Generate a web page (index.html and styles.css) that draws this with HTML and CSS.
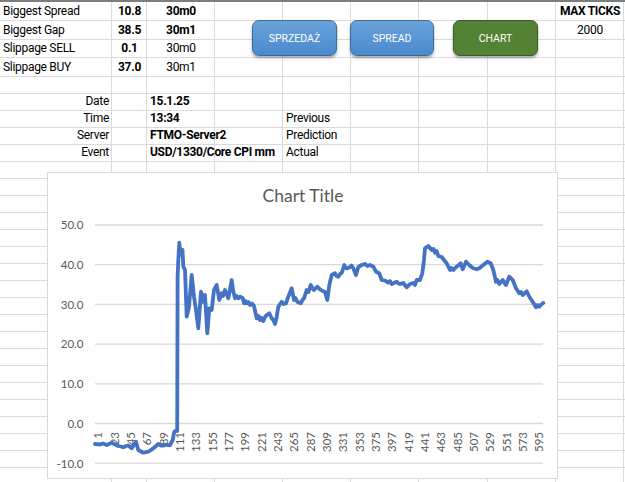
FILE: index.html
```html
<!DOCTYPE html>
<html lang="pl">
<head>
    <meta charset="UTF-8">
    <meta name="viewport" content="width=device-width, initial-scale=1.0">
    <title>Tick Monitor</title>
    <link rel="stylesheet" href="styles.css">
</head>
<body>
    <!-- Sheet cells (each row starts in column A) -->
    <div class="sheet">
        <div class="cell col-a">Biggest Spread</div>
        <div class="cell center bold">10.8</div>
        <div class="cell center bold">30m0</div>
        <div class="cell col-i center bold">MAX TICKS</div>

        <div class="cell col-a">Biggest Gap</div>
        <div class="cell center bold">38.5</div>
        <div class="cell center bold">30m1</div>
        <div class="cell col-i center">2000</div>

        <div class="cell col-a">Slippage SELL</div>
        <div class="cell center bold">0.1</div>
        <div class="cell center">30m0</div>

        <div class="cell col-a">Slippage BUY</div>
        <div class="cell center bold">37.0</div>
        <div class="cell center">30m1</div>

        <div class="cell col-a"></div>

        <div class="cell col-a right">Date</div>
        <div class="cell"></div>
        <div class="cell bold">15.1.25</div>

        <div class="cell col-a right">Time</div>
        <div class="cell"></div>
        <div class="cell bold">13:34</div>
        <div class="cell"></div>
        <div class="cell">Previous</div>

        <div class="cell col-a right">Server</div>
        <div class="cell"></div>
        <div class="cell bold">FTMO-Server2</div>
        <div class="cell"></div>
        <div class="cell">Prediction</div>

        <div class="cell col-a right">Event</div>
        <div class="cell"></div>
        <div class="cell bold">USD/1330/Core CPI mm</div>
        <div class="cell"></div>
        <div class="cell">Actual</div>
    </div>

    <!-- Macro buttons -->
    <button class="macro blue btn-sell">SPRZEDAŻ</button>
    <button class="macro blue btn-spread">SPREAD</button>
    <button class="macro green btn-chart">CHART</button>

    <!-- Chart -->
    <div class="chart">
        <svg width="509" height="304" viewBox="48 173 509 304">
            <text class="chart-title" x="303" y="202" text-anchor="middle">Chart Title</text>

            <g class="grid">
                <line x1="95" y1="225" x2="543" y2="225"/>
                <line x1="95" y1="264.7" x2="543" y2="264.7"/>
                <line x1="95" y1="304.4" x2="543" y2="304.4"/>
                <line x1="95" y1="344.1" x2="543" y2="344.1"/>
                <line x1="95" y1="383.8" x2="543" y2="383.8"/>
                <line x1="95" y1="423.5" x2="543" y2="423.5"/>
                <line x1="95" y1="463.2" x2="543" y2="463.2"/>
            </g>

            <g class="axis-y" text-anchor="end">
                <text x="83.5" y="229.3">50.0</text>
                <text x="83.5" y="269">40.0</text>
                <text x="83.5" y="308.7">30.0</text>
                <text x="83.5" y="348.4">20.0</text>
                <text x="83.5" y="388.1">10.0</text>
                <text x="83.5" y="427.8">0.0</text>
                <text x="83.5" y="467.5">-10.0</text>
            </g>

            <g class="axis-x" text-anchor="end">
                <text transform="translate(102.3 432) rotate(-90)">1</text>
                <text transform="translate(118.6 432) rotate(-90)">23</text>
                <text transform="translate(135 432) rotate(-90)">45</text>
                <text transform="translate(151.3 432) rotate(-90)">67</text>
                <text transform="translate(167.6 432) rotate(-90)">89</text>
                <text transform="translate(184 432) rotate(-90)">111</text>
                <text transform="translate(200.3 432) rotate(-90)">133</text>
                <text transform="translate(216.6 432) rotate(-90)">155</text>
                <text transform="translate(233 432) rotate(-90)">177</text>
                <text transform="translate(249.3 432) rotate(-90)">199</text>
                <text transform="translate(265.6 432) rotate(-90)">221</text>
                <text transform="translate(282 432) rotate(-90)">243</text>
                <text transform="translate(298.3 432) rotate(-90)">265</text>
                <text transform="translate(314.6 432) rotate(-90)">287</text>
                <text transform="translate(331 432) rotate(-90)">309</text>
                <text transform="translate(347.3 432) rotate(-90)">331</text>
                <text transform="translate(363.6 432) rotate(-90)">353</text>
                <text transform="translate(380 432) rotate(-90)">375</text>
                <text transform="translate(396.3 432) rotate(-90)">397</text>
                <text transform="translate(412.6 432) rotate(-90)">419</text>
                <text transform="translate(429 432) rotate(-90)">441</text>
                <text transform="translate(445.3 432) rotate(-90)">463</text>
                <text transform="translate(461.6 432) rotate(-90)">485</text>
                <text transform="translate(478 432) rotate(-90)">507</text>
                <text transform="translate(494.3 432) rotate(-90)">529</text>
                <text transform="translate(510.6 432) rotate(-90)">551</text>
                <text transform="translate(527 432) rotate(-90)">573</text>
                <text transform="translate(543.3 432) rotate(-90)">595</text>
            </g>

            <!-- series: ticks -->
            <polyline class="series" points="
                95,444 100,444.5 103,443.5 106.7,445 111.7,442.7 115,444.5 118.3,446 121,446.5 123.3,447.3
                126,446 128.3,445.5 131.7,448.3 134,445 136,441.7 138.3,450 141,451.5 143.3,452.7 146,452
                148.3,451.7 151,450 153.3,448.3 156,446 158.3,444 161,445.5 163.3,445.7 166,444.6 168,445.2
                170,445 172.7,440 174.3,431.7 176.7,430 177.2,431 177.6,276.7 178.3,260 179.3,242.7
                180.3,252 181.7,255 182.5,250 183.3,266.7 185,270 186.7,316.7 189,306.7 191.7,275 194,296.7
                196,310 198.3,328.3 201,291.7 203.3,301.7 205,295 207.3,333.3 209.3,308.3 211.7,310 214,290
                216.7,285 219.3,300 221.7,293.3 223,296 225,290 226.5,294 228.3,298.3 231.7,280 233,290
                235,298.3 236.5,296 238.3,298.3 240,296.7 242.7,298 244,303.3 245.5,301 246.7,303.3 248.5,302
                250,305 252,303.5 254,306 256.7,318.3 258.5,316 260,320 261.5,318 263.3,321 265,317
                266.7,315 269.3,313.3 271.7,318.3 273.5,320 275,324 276.5,318 278.3,306.7 281.7,301.7
                283.5,304 286,303.3 288.3,296.7 291.7,288.3 294,300 295.5,298 297.3,301.7 300.7,303.3
                302.5,300 304,298.3 306.7,290 308.5,292 310.7,285 312.5,288 314,290 317.3,286.7 320,289.3
                322.7,291 325,292 327.3,300 329.3,285 331.7,275 335,273.3 336.5,276 338.3,276.7 340,274
                341.7,273 344.3,265 345.5,268 347.3,268.3 350,267 351.5,265.5 353.3,268.3 356,275 358.3,267
                361.7,265 365,264 367.5,266 370,265 373.3,266.7 376,271.7 379.3,273.3 381.7,280 385,280.7
                388.3,282.7 390,281 391.7,284 394,283 396.7,281.7 398.5,283.5 400,284 403.3,283 406.7,287.3
                410,284 413.3,283 415,285 416.7,280 420,280 422.3,273.3 424,260 425,248.3 428.3,246
                430,248 431.7,250 433.5,249 435,252.7 436.5,251 438.3,256 441.7,257 444,260 446.7,263.3
                450,270 451.5,268 453.3,270 456.7,266.7 460.7,263.3 462.7,269.3 466,261.7 469.3,265
                471.5,267 473.3,268.3 476.7,269.3 479.3,268.3 483.3,265 487.3,261.7 490.7,263.3 493.3,270
                496,281.7 497.5,280 499.3,284 502.7,280 504.5,283 506,285 509.3,276.7 512.7,280 516,288.3
                519.3,293.3 521,292 522.7,295 526.7,291.3 529.3,296.7 532.7,301.7 536,307.3 537.5,305
                539.3,306.7 541.7,304 543.3,303"/>
        </svg>
    </div>
</body>
</html>
```

FILE: styles.css
```css
body {
    margin: 0;
    height: 100vh;
    overflow: hidden;
    background-color: #ffffff;
    font-family: "Roboto", "Liberation Sans", sans-serif;
    font-size: 12px;
    letter-spacing: -0.3px;
    color: #000000;
}
.sheet {
    height: 100%;
    box-sizing: border-box;
    border-top: 2px solid #7d7d7d;
    display: grid;
    grid-template-columns: 112px 35px 68px 68px 68px 68px 69px 68px 68px 1fr;
    grid-template-rows: 19px 19px 18px 19px 17px 17px 17px 17px 17px;
    align-content: start;
    background-image:
        linear-gradient(to right,
            transparent 111px, #dadada 111px 112px,
            transparent 112px 146px, #dadada 146px 147px,
            transparent 147px 214px, #dadada 214px 215px,
            transparent 215px 282px, #dadada 282px 283px,
            transparent 283px 350px, #dadada 350px 351px,
            transparent 351px 418px, #dadada 418px 419px,
            transparent 419px 487px, #dadada 487px 488px,
            transparent 488px 555px, #dadada 555px 556px,
            transparent 556px 623px, #dadada 623px 624px,
            transparent 624px),
        linear-gradient(to bottom,
            transparent 18px, #dadada 18px 19px,
            transparent 19px 37px, #dadada 37px 38px,
            transparent 38px 55px, #dadada 55px 56px,
            transparent 56px 74px, #dadada 74px 75px,
            transparent 75px),
        repeating-linear-gradient(to bottom, transparent 0 16px, #dadada 16px 17px);
    background-size: 100% 100%, 100% 100%, 100% 100%;
    background-position: 0 0, 0 0, 0 75px;
    background-repeat: no-repeat;
}
.cell {
    display: flex;
    align-items: flex-end;
    padding: 0 3px 3px 3px;
    line-height: 13px;
    white-space: nowrap;
    min-width: 0;
}
.col-a {
    grid-column: 1;
}
.col-i {
    grid-column: 9;
}
.center {
    justify-content: center;
}
.right {
    justify-content: flex-end;
}
.bold {
    font-weight: bold;
}

/* macro buttons over the sheet */
.macro {
    position: absolute;
    top: 20px;
    height: 36px;
    box-sizing: border-box;
    padding: 0;
    border-radius: 7px;
    font-family: "Roboto", "Liberation Sans", sans-serif;
    font-size: 10.5px;
    color: #ffffff;
    box-shadow: 0 2px 3px rgba(0, 0, 0, 0.35);
    cursor: pointer;
}
.macro.blue {
    background: linear-gradient(#6aa3dc, #4a89cf);
    border: 1px solid #3f6b96;
}
.macro.green {
    background-color: #548235;
    border: 1px solid #3a5a26;
}
.btn-sell {
    left: 252px;
    width: 85px;
}
.btn-spread {
    left: 350px;
    width: 84px;
}
.btn-chart {
    left: 453px;
    width: 85px;
}

/* embedded chart object */
.chart {
    position: absolute;
    left: 47px;
    top: 172px;
    width: 509px;
    height: 305px;
    border: 1px solid #d9d9d9;
    background-color: #ffffff;
}
.chart svg {
    display: block;
    font-family: "Lato", "Open Sans", sans-serif;
    letter-spacing: 0;
}
.chart-title {
    font-size: 17.5px;
    fill: #595959;
}
.grid line {
    stroke: #d9d9d9;
    stroke-width: 1.3;
}
.axis-y text,
.axis-x text {
    font-size: 11.5px;
    fill: #595959;
}
.series {
    fill: none;
    stroke: #4472c4;
    stroke-width: 3.8;
    stroke-linejoin: round;
    stroke-linecap: round;
}
```
